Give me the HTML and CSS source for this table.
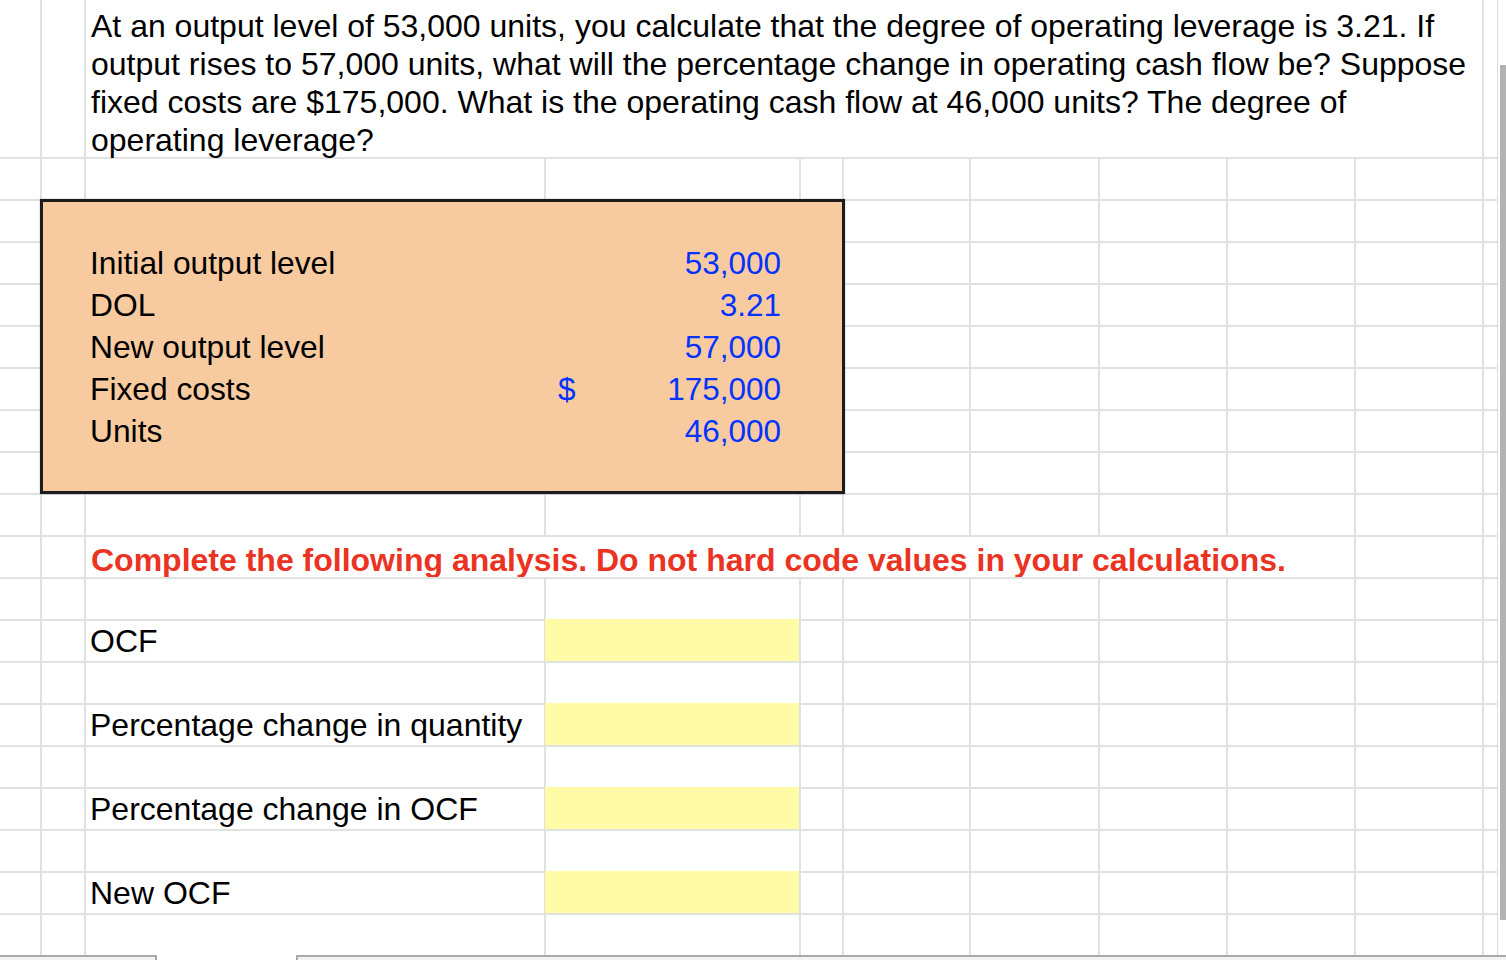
FILE: index.html
```html
<!DOCTYPE html>
<html>
<head>
<meta charset="utf-8">
<link rel="stylesheet" href="styles.css">
</head>
<body>
<div class="window">
  <div class="main">
    <div class="sheet">
      <!-- row 1 -->
      <i></i><i></i>
      <div class="question">At an output level of 53,000 units, you calculate that the degree of operating leverage is 3.21. If output rises to 57,000 units, what will the percentage change in operating cash flow be? Suppose fixed costs are $175,000. What is the operating cash flow at 46,000 units? The degree of operating leverage?</div>
      <i></i>
      <!-- row 2 -->
      <i></i><i></i><i></i><i></i><i></i><i></i><i></i><i></i><i></i><i></i><i></i>
      <!-- rows 3-9 : input box -->
      <div class="inputs">
        <div class="in-label">Initial output level</div>
        <div class="in-value"><span class="cur"></span><span>53,000</span></div>
        <div class="in-label">DOL</div>
        <div class="in-value"><span class="cur"></span><span>3.21</span></div>
        <div class="in-label">New output level</div>
        <div class="in-value"><span class="cur"></span><span>57,000</span></div>
        <div class="in-label">Fixed costs</div>
        <div class="in-value"><span class="cur">$</span><span>175,000</span></div>
        <div class="in-label">Units</div>
        <div class="in-value"><span class="cur"></span><span>46,000</span></div>
      </div>
      <i></i><i></i><i></i><i></i><i></i><i></i><i></i>
      <i></i><i></i><i></i><i></i><i></i><i></i><i></i>
      <i></i><i></i><i></i><i></i><i></i><i></i><i></i>
      <i></i><i></i><i></i><i></i><i></i><i></i><i></i>
      <i></i><i></i><i></i><i></i><i></i><i></i><i></i>
      <i></i><i></i><i></i><i></i><i></i><i></i><i></i>
      <i></i><i></i><i></i><i></i><i></i><i></i><i></i>
      <!-- row 10 -->
      <i></i><i></i><i></i><i></i><i></i><i></i><i></i><i></i><i></i><i></i><i></i>
      <!-- row 11 -->
      <i></i><i></i>
      <div class="instruction">Complete the following analysis. Do not hard code values in your calculations.</div>
      <i></i><i></i>
      <!-- row 12 -->
      <i></i><i></i><i></i><i></i><i></i><i></i><i></i><i></i><i></i><i></i><i></i>
      <!-- row 13 -->
      <i></i><i></i>
      <div class="label r13">OCF</div>
      <div class="answer r13"></div>
      <i></i><i></i><i></i><i></i><i></i><i></i><i></i>
      <!-- row 14 -->
      <i></i><i></i><i></i><i></i><i></i><i></i><i></i><i></i><i></i><i></i><i></i>
      <!-- row 15 -->
      <i></i><i></i>
      <div class="label r15">Percentage change in quantity</div>
      <div class="answer r15"></div>
      <i></i><i></i><i></i><i></i><i></i><i></i><i></i>
      <!-- row 16 -->
      <i></i><i></i><i></i><i></i><i></i><i></i><i></i><i></i><i></i><i></i><i></i>
      <!-- row 17 -->
      <i></i><i></i>
      <div class="label r17">Percentage change in OCF</div>
      <div class="answer r17"></div>
      <i></i><i></i><i></i><i></i><i></i><i></i><i></i>
      <!-- row 18 -->
      <i></i><i></i><i></i><i></i><i></i><i></i><i></i><i></i><i></i><i></i><i></i>
      <!-- row 19 -->
      <i></i><i></i>
      <div class="label r19">New OCF</div>
      <div class="answer r19"></div>
      <i></i><i></i><i></i><i></i><i></i><i></i><i></i>
      <!-- row 20 -->
      <i></i><i></i><i></i><i></i><i></i><i></i><i></i><i></i><i></i><i></i><i></i>
    </div>
    <div class="scrollbar"><div class="thumb"></div></div>
  </div>
  <div class="tabs">
    <div class="tab-left"></div>
    <div class="tab-active"></div>
    <div class="tab-right"></div>
  </div>
</div>
</body>
</html>
```

FILE: styles.css
```css
html, body {
  margin: 0;
  padding: 0;
  background: #ffffff;
}

body {
  font-family: "Liberation Sans", Arial, Helvetica, sans-serif;
  font-size: 32px;
  color: #000000;
}

.window {
  width: 1506px;
  height: 960px;
  overflow: hidden;
  display: flex;
  flex-direction: column;
}

.main {
  display: flex;
  height: 955px;
  flex: none;
}

.sheet {
  width: 1497px;
  height: 955px;
  display: grid;
  grid-template-columns: 40px 42px 458px 253px 41px 125px 127px 126px 126px 126px 13px;
  grid-template-rows: 157px repeat(19, 40px);
  gap: 2px;
  background: #e1e1e1;
  overflow: hidden;
}

.sheet > i {
  display: block;
  background: #ffffff;
}

.question {
  grid-column: 3 / 11;
  grid-row: 1;
  background: #ffffff;
  padding: 7px 6px 0 5px;
  line-height: 38px;
}

.inputs {
  grid-column: 2 / 6;
  grid-row: 3 / 10;
  margin: -2px -3px -1px -2px;
  z-index: 1;
  background: #f7cb9f;
  border: 3px solid #1c1c1c;
  box-shadow: 0 0 1px rgba(0, 0, 0, 0.5);
  display: grid;
  grid-template-columns: 460px 253px;
  grid-auto-rows: 40px;
  row-gap: 2px;
  padding: 41px 0 0 43px;
  align-content: start;
}

.in-label {
  padding-left: 4px;
  line-height: 41px;
  font-size: 31.75px;
  white-space: nowrap;
}

.in-value {
  display: flex;
  justify-content: space-between;
  padding: 0 18px 0 12px;
  line-height: 41px;
  font-size: 31.5px;
  color: #0433ff;
}

.instruction {
  grid-column: 3 / 10;
  grid-row: 11;
  background: #ffffff;
  padding: 3px 0 0 5px;
  line-height: 40px;
  font-weight: bold;
  color: #ea3323;
  white-space: nowrap;
  overflow: hidden;
}

.label {
  grid-column: 3;
  background: #ffffff;
  padding-left: 4px;
  line-height: 40px;
  white-space: nowrap;
}

.answer {
  grid-column: 4;
  background: #fffba6;
  margin-top: -2px;
  margin-left: -1px;
}

.r13 { grid-row: 13; }
.r15 { grid-row: 15; }
.r17 { grid-row: 17; }
.r19 { grid-row: 19; }

.scrollbar {
  width: 8px;
  height: 955px;
  border-left: 1px solid #dddddd;
  background: #ffffff;
  flex: none;
}

.thumb {
  width: 6px;
  height: 855px;
  margin: 65px 0 0 2px;
  background: #b3b3b3;
}

.tabs {
  display: flex;
  height: 5px;
  flex: none;
}

.tab-left {
  width: 155px;
  border-top: 2px solid #a8a8a8;
  border-right: 2px solid #a8a8a8;
  background: #f3f3f3;
}

.tab-active {
  width: 139px;
  background: #ffffff;
}

.tab-right {
  flex: 1;
  border-top: 2px solid #a8a8a8;
  border-left: 2px solid #a8a8a8;
  background: #f3f3f3;
}
```
